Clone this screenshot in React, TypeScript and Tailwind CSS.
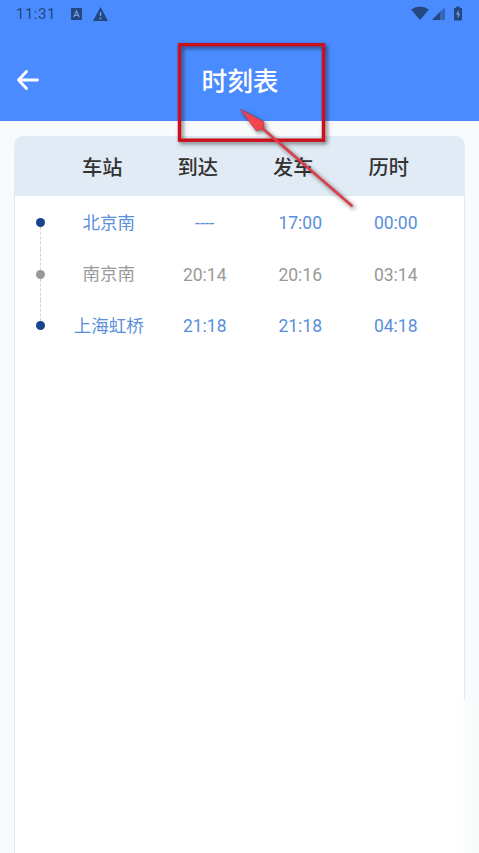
const stops = [
  { station: '北京南', arrive: '----', depart: '17:00', duration: '00:00', active: true },
  { station: '南京南', arrive: '20:14', depart: '20:16', duration: '03:14', active: false },
  { station: '上海虹桥', arrive: '21:18', depart: '21:18', duration: '04:18', active: true },
]

const StatusBar = () => {
  return (
    <div className="flex h-7 items-center justify-between pl-4 pr-[17px] text-[#24477f]">
      <div className="flex items-center">
        <span className="w-[55px] pt-px text-[15px] leading-none tracking-[0.5px]">11:31</span>
        <svg width="11" height="12" viewBox="0 0 11 12">
          <rect width="11" height="12" rx="1" fill="currentColor" />
          <path d="M2.7 9.2 5.5 3l2.8 6.2M3.8 7.4h3.4" fill="none" stroke="#6f9ee8" strokeWidth="1.2" />
        </svg>
        <svg className="-mt-px ml-[11px]" width="15" height="14" viewBox="0 0 15 14">
          <path d="M7.5 0 15 14H0z" fill="currentColor" />
          <path d="M7.5 5v4M7.5 10.6v1.6" stroke="#6f9ee8" strokeWidth="1.5" />
        </svg>
      </div>
      <div className="flex items-center">
        <svg className="-mt-[2px]" width="18" height="14" viewBox="0 0 18 14">
          <path d="M0 3.5Q9-2.7 18 3.5L9 14z" fill="currentColor" />
        </svg>
        <svg className="ml-[3px] -mt-px" width="13" height="13" viewBox="0 0 13 13">
          <path d="M13 0v13H0z" fill="#3767b7" />
          <path d="M8 5V13H0z" fill="currentColor" />
        </svg>
        <svg className="ml-[9px] -mt-[2px]" width="8" height="15" viewBox="0 0 9 16">
          <path d="M2.5 0h4v1.7H8q1 0 1 1V15q0 1-1 1H1q-1 0-1-1V2.7q0-1 1-1h1.5z" fill="currentColor" />
          <path d="M5.2 4 2.2 9h2v4.5L7 8.2H5.2z" fill="#6f9ee8" />
        </svg>
      </div>
    </div>
  )
}

const App = () => {
  return (
    <div className="relative flex h-[853px] w-[479px] flex-col overflow-hidden bg-[#f8fafc] font-['Roboto','Noto_Sans_CJK_SC',sans-serif]">
      <header className="h-[121px] shrink-0 bg-[#4a8cff]">
        <StatusBar />
        <div className="grid h-[104px] grid-cols-[1fr_auto_1fr] items-center pl-[17px] pr-4">
          <svg width="22" height="20" viewBox="0 0 22 20" fill="none" stroke="white" strokeWidth="2.8" strokeLinecap="round" strokeLinejoin="round">
            <path d="M20.5 10H1.5M9.5 1.5 1.5 10l8 8.5" />
          </svg>
          <h1 className="pt-[5px] text-[25.7px] font-medium leading-none text-white">时刻表</h1>
        </div>
      </header>

      <main className="mx-[14px] mt-[15px] flex-1 rounded-t-[10px] border-x border-[#e5e9ee] bg-white">
        <div className="-mx-px flex h-[60px] items-center rounded-t-[10px] bg-[#e1ebf5] pl-[40.5px] pt-[4px] text-center text-[20.3px] font-medium text-[#333]">
          <span className="w-[95.5px]">车站</span>
          <span className="w-[95.5px]">到达</span>
          <span className="w-[95.5px]">发车</span>
          <span className="w-[95.5px]">历时</span>
        </div>
        <div className="pt-[1px]">
          {stops.map((stop, i) => (
            <div key={stop.station} className={`flex h-[51.5px] items-center text-center text-[17.5px] ${stop.active ? 'text-[#5a8fdc]' : 'text-[#999]'}`}>
              <div className="flex h-full w-[46px] flex-col items-center pl-[4px]">
                <div className={`w-px flex-1 ${i > 0 ? 'border-l border-dashed border-[#d4d4d4]' : ''}`} />
                <div className={`size-[9px] rounded-full ${stop.active ? 'bg-[#17438f]' : 'bg-[#999]'}`} />
                <div className={`w-px flex-1 ${i < stops.length - 1 ? 'border-l border-dashed border-[#d4d4d4]' : ''}`} />
              </div>
              <span className="w-[95.5px]">{stop.station}</span>
              <span className="w-[95.5px] pl-px pt-px">{stop.arrive}</span>
              <span className="w-[95.5px] pl-px pt-px">{stop.depart}</span>
              <span className="w-[95.5px] pl-px pt-px">{stop.duration}</span>
            </div>
          ))}
        </div>
      </main>

      <div className="absolute bottom-0 right-0 h-[153px] w-6 bg-linear-to-r from-white to-[#f8fafc]" />

      <svg className="absolute left-0 top-0 drop-shadow-[2px_2px_2px_rgba(0,0,0,0.55)]" width="479" height="230" viewBox="0 0 479 230">
        <rect x="179.5" y="44.7" width="144" height="95.5" fill="none" stroke="#cc101b" strokeWidth="3.4" />
        <path d="m262 128 89.5 77.5" stroke="#db3f49" strokeWidth="2.8" strokeLinecap="round" />
        <path d="m240.5 109.500 23.500 12.500-1 6-6.500 3z" fill="#f54450" stroke="#c93142" strokeWidth="0.8" />
      </svg>
    </div>
  )
}

export default App
